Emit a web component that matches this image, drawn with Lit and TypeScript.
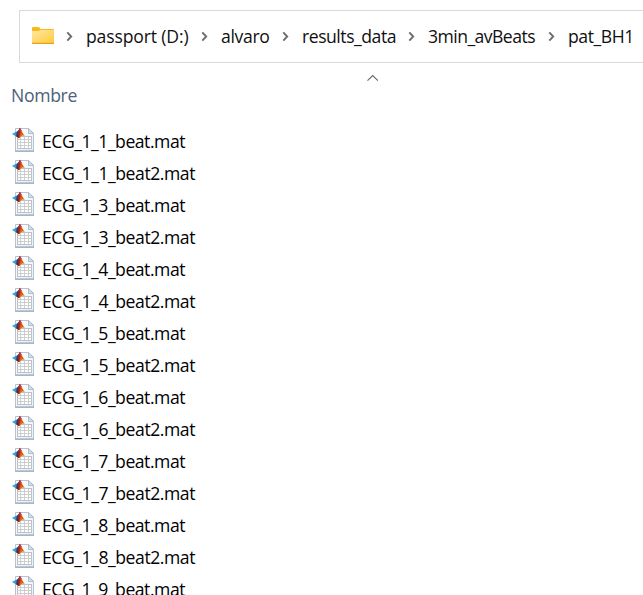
import { LitElement, html, css, svg } from "lit";
import { customElement } from "lit/decorators.js";

const crumbs = [
  { label: "passport (D:)", width: 102.5, lead: 11 },
  { label: "alvaro", width: 48.5, lead: 12.5 },
  { label: "results_data", width: 94, lead: 12.5 },
  { label: "3min_avBeats", width: 107, lead: 12 },
  { label: "pat_BH1", width: 66, lead: 13 },
];

const files = [1, 3, 4, 5, 6, 7, 8, 9]
  .flatMap((n) => [`ECG_1_${n}_beat.mat`, `ECG_1_${n}_beat2.mat`])
  .slice(0, 15);

const folderIcon = svg`
  <svg width="24" height="20" viewBox="0 0 24 20">
    <defs>
      <linearGradient id="f" x1="0" y1="0" x2="1" y2="1">
        <stop offset="0" stop-color="#ffe8a0"/><stop offset="1" stop-color="#ffca3c"/>
      </linearGradient>
    </defs>
    <path d="M1 5V2Q1 1 2 1H7.4Q8 1 8.4 1.5L9.6 3H22.4Q23 3 23 3.6V8H1Z" fill="#f9b91c"/>
    <path d="M1 5H7.6L9.4 4H23V17.5H1Z" fill="url(#f)"/>
    <path d="M1 16.8H23V17.4Q23 18 22.4 18H1.6Q1 18 1 17.4Z" fill="#e7a21c"/>
  </svg>`;

const chevron = svg`
  <svg class="chevron" width="7" height="11" viewBox="0 0 7 11">
    <path d="M1.3 1.4L5.2 5.5L1.3 9.6" fill="none" stroke="#6d6d6d" stroke-width="1.9"/>
  </svg>`;

@customElement("mat-icon")
class MatIcon extends LitElement {
  static styles = css`
    :host { display: block; width: 24px; height: 26px; flex: none; }
    svg { display: block; }
  `;
  render() {
    return html`<svg width="24" height="26" viewBox="0 0 24 26">
      <defs>
        <linearGradient id="p" x1="0" y1="0" x2="1" y2="1">
          <stop offset="0" stop-color="#fff"/><stop offset="1" stop-color="#e9eff6"/>
        </linearGradient>
        <linearGradient id="r" x1="0" y1="0" x2="1" y2="0">
          <stop offset="0" stop-color="#4a1620"/><stop offset=".5" stop-color="#c8361a"/><stop offset="1" stop-color="#f08a24"/>
        </linearGradient>
      </defs>
      <path d="M3.5 1.5H16.4L21.5 6.2V24H3.5Z" fill="url(#p)" stroke="#b3c4d4"/>
      <path d="M3 24.2H22" stroke="#9fb3c6" stroke-width="1.4"/>
      <path d="M16.5 1.7V6.4H21.4Z" fill="#dbe7f2" stroke="#9db4c9" stroke-width=".9"/>
      <rect x="5.5" y="9.5" width="14" height="12" fill="#fff" stroke="#bcc0c4"/>
      <path d="M5.5 12.5H19.5M5.5 15.5H19.5M5.5 18.5H19.5M8.5 9.5V21M12.5 9.5V21M16.5 9.5V21" stroke="#c6c9cd" stroke-width=".9"/>
      <path d="M0 6.8L5 4.6L7 6.6L4 9.4Z" fill="#3a97d0"/>
      <path d="M4.8 4.8Q6.8 3.6 8 1L8 8L4 9.4Z" fill="#28446c"/>
      <path d="M7.8 .8C9.3 1.2 10 6 12.9 9.1Q10.6 7.6 8.9 9.3Q7.5 11.3 6.3 11.2Q5.5 9.4 4 9.4C6.4 8.6 6.4 3.3 7.8 .8Z" fill="url(#r)"/>
      <path d="M8.2 1.6C9.3 4.4 9.1 7.4 7.6 10.2Q8.6 9.8 9.5 8.7Q10 6 8.2 1.6Z" fill="#f37a20"/>
    </svg>`;
  }
}

@customElement("app-root")
class AppRoot extends LitElement {
  static styles = css`
    :host {
      display: block; height: 595px; overflow: hidden; background: #fff;
      font-family: "Open Sans", "Noto Sans", sans-serif; font-size: 17.6px; color: #101010;
    }
    .bar {
      box-sizing: border-box; height: 53px; margin: 10px 0 0 19px; padding-left: 11px;
      border: 1px solid #d9d9d9; border-right: 0; display: flex; align-items: center;
    }
    .folder { display: flex; width: 24px; flex: none; margin-top: -1px; }
    .crumb { display: flex; align-items: center; flex: none; }
    .chevron { margin: 1px 13px 0 0; flex: none; }
    .label { white-space: pre; display: block; line-height: 24px; margin-bottom: 2px; }
    .crumb .chevron { margin-top: 0; }
    .sort { display: flex; justify-content: center; height: 8px; width: 14px; margin: 11px 0 0 366px; }
    .heading { height: 26px; line-height: 26px; margin: 0 0 0 11px; color: #4c6078; }
    .list { margin-top: 18px; }
    .row { display: flex; height: 32px; align-items: center; padding-left: 12px; }
    mat-icon { margin-top: -4px; }
    .name { margin-left: 6px; white-space: pre; line-height: 31px; height: 32px; color: #000; }
  `;

  private fit() {
    this.renderRoot.querySelectorAll<HTMLElement>("[data-w]").forEach((el) => {
      el.style.letterSpacing = "0px";
      const inner = el.firstElementChild as HTMLElement;
      const gap = (Number(el.dataset.w) - inner.getBoundingClientRect().width) / inner.textContent!.length;
      el.style.letterSpacing = `${gap}px`;
    });
  }

  firstUpdated() {
    this.fit();
    document.fonts.ready.then(() => this.fit());
  }

  render() {
    return html`
      <div class="bar">
        <span class="folder">${folderIcon}</span>
        ${crumbs.map((c) => html`<div class="crumb" style="padding-left:${c.lead}px">${chevron}<span class="label" data-w=${c.width} style="width:${c.width}px"><span>${c.label}</span></span></div>`)}
      </div>
      <div class="sort">
        <svg width="14" height="8" viewBox="0 0 14 8"><path d="M1.5 6.7L6.7 1.5L11.9 6.7" fill="none" stroke="#666" stroke-width="1.1"/></svg>
      </div>
      <div class="heading"><span data-w="66"><span>Nombre</span></span></div>
      <div class="list">
        ${files.map((f) => html`<div class="row"><mat-icon></mat-icon><span class="name" data-w=${f.includes("beat2") ? 153 : 143}><span>${f}</span></span></div>`)}
      </div>`;
  }
}
